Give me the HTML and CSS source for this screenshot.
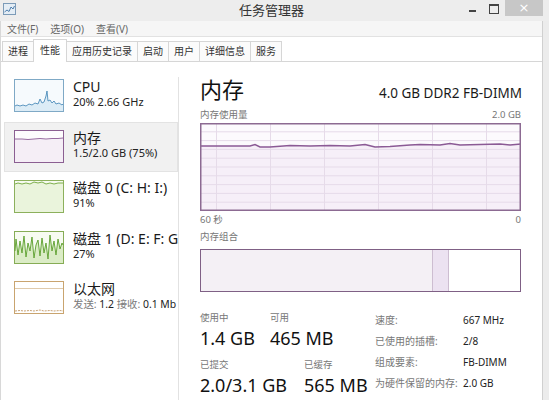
FILE: index.html
```html
<!DOCTYPE html>
<html lang="zh-CN">
<head>
<meta charset="utf-8">
<title>任务管理器</title>
<link rel="stylesheet" href="styles.css">
</head>
<body>
<div class="window">
  <div class="titlebar">
    <svg class="app-icon" width="13" height="12" viewBox="0 0 13 12">
      <rect x="0.5" y="0.5" width="12" height="11" fill="#e4edf5" stroke="#7c9bb8"/>
      <polyline points="1.5,9 4,7 6,8.5 8,4 10,6 11.5,3" fill="none" stroke="#4f7fae" stroke-width="1"/>
    </svg>
    <div class="title">任务管理器</div>
    <div class="controls">
      <span class="ctl min"></span>
      <span class="ctl max"></span>
      <span class="close">×</span>
    </div>
  </div>
  <div class="client">
    <div class="menubar">
      <span>文件(F)</span><span>选项(O)</span><span>查看(V)</span>
    </div>
    <div class="tabs">
      <div class="tab">进程</div>
      <div class="tab active">性能</div>
      <div class="tab">应用历史记录</div>
      <div class="tab">启动</div>
      <div class="tab">用户</div>
      <div class="tab">详细信息</div>
      <div class="tab">服务</div>
    </div>
    <div class="content">
      <div class="sidebar">
        <div class="item">
          <svg class="thumb" viewBox="0 0 50 33" width="50" height="33">
            <rect x="0.5" y="0.5" width="49" height="32" fill="#f6fafd" stroke="#7fa9c6"/>
            <polygon points="1,27 3,26 6,27 9,26 12,27 15,25 18,26 21,24 24,25 26,20 28,24 30,23 32,17 33,12 34,22 36,21 38,24 40,22 42,25 45,24 48,26 49,25 49,32 1,32" fill="#dcecf6"/>
            <polyline points="1,27 3,26 6,27 9,26 12,27 15,25 18,26 21,24 24,25 26,20 28,24 30,23 32,17 33,12 34,22 36,21 38,24 40,22 42,25 45,24 48,26 49,25" fill="none" stroke="#4d8cba" stroke-width="0.9"/>
          </svg>
          <div class="info">
            <div class="name">CPU</div>
            <div class="sub">20% 2.66 GHz</div>
          </div>
        </div>
        <div class="item selected">
          <svg class="thumb" viewBox="0 0 50 33" width="50" height="33">
            <rect x="0.5" y="0.5" width="49" height="32" fill="#fdfbfd" stroke="#8b5f92"/>
            <polygon points="1,9 8,9 14,9.5 20,9 26,8.5 32,9 38,8.5 44,8.5 49,8 49,32 1,32" fill="#f5eef6"/>
            <polyline points="1,9 8,9 14,9.5 20,9 26,8.5 32,9 38,8.5 44,8.5 49,8" fill="none" stroke="#8b5a95" stroke-width="0.9"/>
          </svg>
          <div class="info">
            <div class="name">内存</div>
            <div class="sub">1.5/2.0 GB (75%)</div>
          </div>
        </div>
        <div class="item">
          <svg class="thumb" viewBox="0 0 50 33" width="50" height="33">
            <rect x="0.5" y="0.5" width="49" height="32" fill="#f7fbf1" stroke="#8cb05c"/>
            <polygon points="1,4 4,3 8,4 12,3 16,4 20,2 24,3 28,2 32,4 36,3 40,4 44,3 49,3 49,32 1,32" fill="#eaf4dc"/>
            <polyline points="1,4 4,3 8,4 12,3 16,4 20,2 24,3 28,2 32,4 36,3 40,4 44,3 49,3" fill="none" stroke="#6fa63a" stroke-width="0.9"/>
          </svg>
          <div class="info">
            <div class="name">磁盘 0 (C: H: I:)</div>
            <div class="sub">91%</div>
          </div>
        </div>
        <div class="item">
          <svg class="thumb" viewBox="0 0 50 33" width="50" height="33">
            <rect x="0.5" y="0.5" width="49" height="32" fill="#f7fbf1" stroke="#86ac55"/>
            <polygon points="1,20 2,8 4,24 6,10 8,22 10,5 12,26 14,12 16,20 18,6 20,27 22,14 24,9 26,25 28,7 30,22 32,12 34,28 36,4 38,20 40,10 42,24 44,8 46,18 48,12 49,14 49,32 1,32" fill="#dbecc6"/>
            <polyline points="1,20 2,8 4,24 6,10 8,22 10,5 12,26 14,12 16,20 18,6 20,27 22,14 24,9 26,25 28,7 30,22 32,12 34,28 36,4 38,20 40,10 42,24 44,8 46,18 48,12 49,14" fill="none" stroke="#5a9e2a" stroke-width="0.9"/>
          </svg>
          <div class="info">
            <div class="name">磁盘 1 (D: E: F: G:</div>
            <div class="sub">27%</div>
          </div>
        </div>
        <div class="item">
          <svg class="thumb" viewBox="0 0 50 33" width="50" height="33">
            <rect x="0.5" y="0.5" width="49" height="32" fill="#ffffff" stroke="#c9a46f"/>
            <line x1="1" y1="7.5" x2="49" y2="7.5" stroke="#d8bd96" stroke-width="0.8"/>
            <polyline points="1,30 6,29.5 10,30 16,29.5 20,30 26,29 30,30 36,29.5 40,30 46,29.5 49,30" fill="none" stroke="#b98a52" stroke-width="0.8" stroke-dasharray="2 1"/>
          </svg>
          <div class="info">
            <div class="name">以太网</div>
            <div class="sub net"><span class="muted">发送:</span> 1.2 <span class="muted">接收:</span> 0.1 Mb</div>
          </div>
        </div>
      </div>
      <div class="main">
        <div class="head">
          <h1>内存</h1>
          <div class="spec">4.0 GB DDR2 FB-DIMM</div>
        </div>
        <div class="axis first"><span>内存使用量</span><span>2.0 GB</span></div>
        <svg class="graph" viewBox="0 0 321 88" width="321" height="88">
          <rect x="0" y="0" width="321" height="88" fill="#fcfafd"/>
          <polygon points="0,23 50,23 55,21.5 60,24 70,24 90,22.5 110,23 130,22.5 150,23 165,21.5 175,24 190,23.5 210,22 220,21.5 240,22 250,20.5 260,22 280,21.5 300,21 310,22 321,21 321,88 0,88" fill="#f6eff8"/>
          <g stroke="#e6dbe9" stroke-width="1">
            <line x1="0" y1="8.8" x2="321" y2="8.8"/>
            <line x1="0" y1="17.6" x2="321" y2="17.6"/>
            <line x1="0" y1="26.4" x2="321" y2="26.4"/>
            <line x1="0" y1="35.2" x2="321" y2="35.2"/>
            <line x1="0" y1="44" x2="321" y2="44"/>
            <line x1="0" y1="52.8" x2="321" y2="52.8"/>
            <line x1="0" y1="61.6" x2="321" y2="61.6"/>
            <line x1="0" y1="70.4" x2="321" y2="70.4"/>
            <line x1="0" y1="79.2" x2="321" y2="79.2"/>
            <line x1="16.5" y1="0" x2="16.5" y2="88"/>
            <line x1="70.5" y1="0" x2="70.5" y2="88"/>
            <line x1="124.5" y1="0" x2="124.5" y2="88"/>
            <line x1="178.5" y1="0" x2="178.5" y2="88"/>
            <line x1="232.5" y1="0" x2="232.5" y2="88"/>
            <line x1="286.5" y1="0" x2="286.5" y2="88"/>
          </g>
          <polyline points="0,23 50,23 55,21.5 60,24 70,24 90,22.5 110,23 130,22.5 150,23 165,21.5 175,24 190,23.5 210,22 220,21.5 240,22 250,20.5 260,22 280,21.5 300,21 310,22 321,21" fill="none" stroke="#8b5a95" stroke-width="1.4"/>
          <rect x="0.75" y="0.75" width="319.5" height="86.5" fill="none" stroke="#8c6a92" stroke-width="1.5"/>
        </svg>
        <div class="axis"><span>60 秒</span><span>0</span></div>
        <div class="label combo-label">内存组合</div>
        <div class="combo">
          <div class="seg inuse"></div>
          <div class="seg modified"></div>
          <div class="seg standby"></div>
        </div>
        <div class="stats">
          <div class="figures">
            <div class="row">
              <div class="fig"><div class="label">使用中</div><div class="value">1.4 GB</div></div>
              <div class="fig"><div class="label">可用</div><div class="value">465 MB</div></div>
            </div>
            <div class="row second">
              <div class="fig"><div class="label">已提交</div><div class="value">2.0/3.1 GB</div></div>
              <div class="fig"><div class="label">已缓存</div><div class="value">565 MB</div></div>
            </div>
          </div>
          <dl class="props">
            <dt>速度:</dt><dd>667 MHz</dd>
            <dt>已使用的插槽:</dt><dd>2/8</dd>
            <dt>组成要素:</dt><dd>FB-DIMM</dd>
            <dt>为硬件保留的内存:</dt><dd>2.0 GB</dd>
          </dl>
        </div>
      </div>
    </div>
  </div>
</div>
</body>
</html>
```

FILE: styles.css
```css
* { box-sizing: border-box; }

html, body {
  margin: 0;
  padding: 0;
  width: 549px;
  height: 400px;
  overflow: hidden;
  background: #ececec;
  font-family: "Noto Sans", "Noto Sans CJK SC", sans-serif;
  color: #222;
}

.window {
  width: 549px;
  height: 400px;
  display: flex;
  flex-direction: column;
  background: #ececec;
}

/* title bar */
.titlebar {
  height: 21px;
  flex: none;
  display: flex;
  align-items: flex-start;
  position: relative;
  background: #ededed;
}
.app-icon {
  margin: 3px 0 0 3px;
  flex: none;
}
.title {
  position: absolute;
  left: 0;
  right: 6px;
  top: 2px;
  text-align: center;
  font-size: 13px;
  line-height: 17px;
  color: #333;
}
.controls {
  margin-left: auto;
  margin-right: 6px;
  display: flex;
  align-items: flex-start;
  height: 16px;
}
.ctl {
  display: block;
  width: 22px;
  height: 16px;
  position: relative;
}
.min::after {
  content: "";
  position: absolute;
  left: 8px;
  top: 10px;
  width: 7px;
  height: 2px;
  background: #444;
}
.max::after {
  content: "";
  position: absolute;
  left: 6px;
  top: 4px;
  width: 8px;
  height: 7px;
  border: 1px solid #444;
  border-top-width: 2px;
}
.close {
  display: block;
  width: 38px;
  height: 16px;
  background: #c7c7c7;
  color: #fff;
  text-align: center;
  font-size: 13px;
  line-height: 15px;
  font-family: "DejaVu Sans", sans-serif;
}

/* client */
.client {
  flex: 1;
  margin-right: 6px;
  border-right: 1px solid #d0d0d0;
  border-left: 1px solid #d8d8d8;
  background: #fff;
  display: flex;
  flex-direction: column;
  min-height: 0;
}

.menubar {
  height: 16px;
  flex: none;
  background: #f6f6f6;
  border-bottom: 1px solid #e2e2e2;
  display: flex;
  gap: 12px;
  padding-left: 6px;
  font-size: 10px;
  line-height: 17px;
  color: #666;
}

.tabs {
  height: 25px;
  flex: none;
  display: flex;
  align-items: flex-end;
  padding-left: 1px;
  border-bottom: 1px solid #d6d6d6;
  background: #fff;
}
.tab {
  height: 20px;
  padding: 0 5px;
  border: 1px solid #d6d6d6;
  border-bottom: none;
  margin-right: -1px;
  font-size: 10px;
  line-height: 19px;
  color: #333;
  background: #fbfbfb;
}
.tab.active {
  height: 23px;
  line-height: 21px;
  background: #fff;
  position: relative;
  top: 1px;
  padding: 0 6px;
  z-index: 1;
}

.content {
  flex: 1;
  display: flex;
  min-height: 0;
}

/* sidebar */
.sidebar {
  width: 178px;
  flex: none;
  padding: 9px 1px 0 3px;
  overflow: hidden;
  background: linear-gradient(#e2e2e2, #e2e2e2) right 15px / 1px 100% no-repeat;
}
.item {
  height: 50.5px;
  display: flex;
  align-items: flex-start;
  gap: 9px;
  padding: 6px 0 0 9px;
  border: 1px solid transparent;
  white-space: nowrap;
}
.item.selected {
  background: #f1f1f1;
  border-color: #e3e3e3;
}
.thumb {
  flex: none;
  margin-top: 1px;
  display: block;
}
.info {
  min-width: 0;
}
.name {
  font-size: 14px;
  line-height: 17px;
  color: #1a1a1a;
}
.sub {
  font-size: 11px;
  line-height: 14px;
  color: #222;
}
.sub.net {
  font-size: 10.4px;
}
.muted {
  color: #7a7a7a;
}

/* main panel */
.main {
  flex: 1;
  min-width: 0;
  padding: 13px 19px 0 21px;
}
.head {
  display: flex;
  align-items: baseline;
  justify-content: space-between;
  height: 28px;
}
.head h1 {
  margin: 0;
  font-size: 22px;
  line-height: 28px;
  font-weight: normal;
  color: #111;
}
.spec {
  font-size: 13.5px;
  color: #1a1a1a;
  padding-right: 1px;
}
.axis {
  display: flex;
  justify-content: space-between;
  font-size: 9.5px;
  line-height: 12px;
  color: #777;
  margin-top: 3px;
  width: 321px;
}
.axis.first {
  margin-top: 6px;
}
.graph {
  display: block;
  margin-top: 2px;
}
.label {
  font-size: 9.5px;
  line-height: 12px;
  color: #777;
}
.combo-label {
  margin-top: 5px;
}
.combo {
  margin-top: 6px;
  width: 321px;
  height: 43px;
  border: 1.5px solid #7f6085;
  display: flex;
  background: #fff;
}
.seg { height: 100%; }
.inuse {
  width: 232px;
  background: #f4f0f5;
  border-right: 1px solid #cdbdd1;
}
.modified {
  width: 16px;
  background: #ece2f1;
  border-right: 1px solid #cdbdd1;
}
.standby {
  flex: 1;
  background: #fff;
}

.stats {
  margin-top: 20px;
  display: flex;
}
.figures {
  width: 175px;
}
.row {
  display: flex;
  gap: 15px;
}
.row.second {
  margin-top: 10px;
  gap: 17px;
}
.value {
  font-size: 18px;
  line-height: 22px;
  margin-top: 3px;
  color: #111;
}
.props {
  margin: 0;
  display: grid;
  grid-template-columns: 88px auto;
  font-size: 10px;
  line-height: 16.7px;
}
.props dt {
  color: #777;
}
.props dd {
  margin: 0;
  color: #222;
}
```
